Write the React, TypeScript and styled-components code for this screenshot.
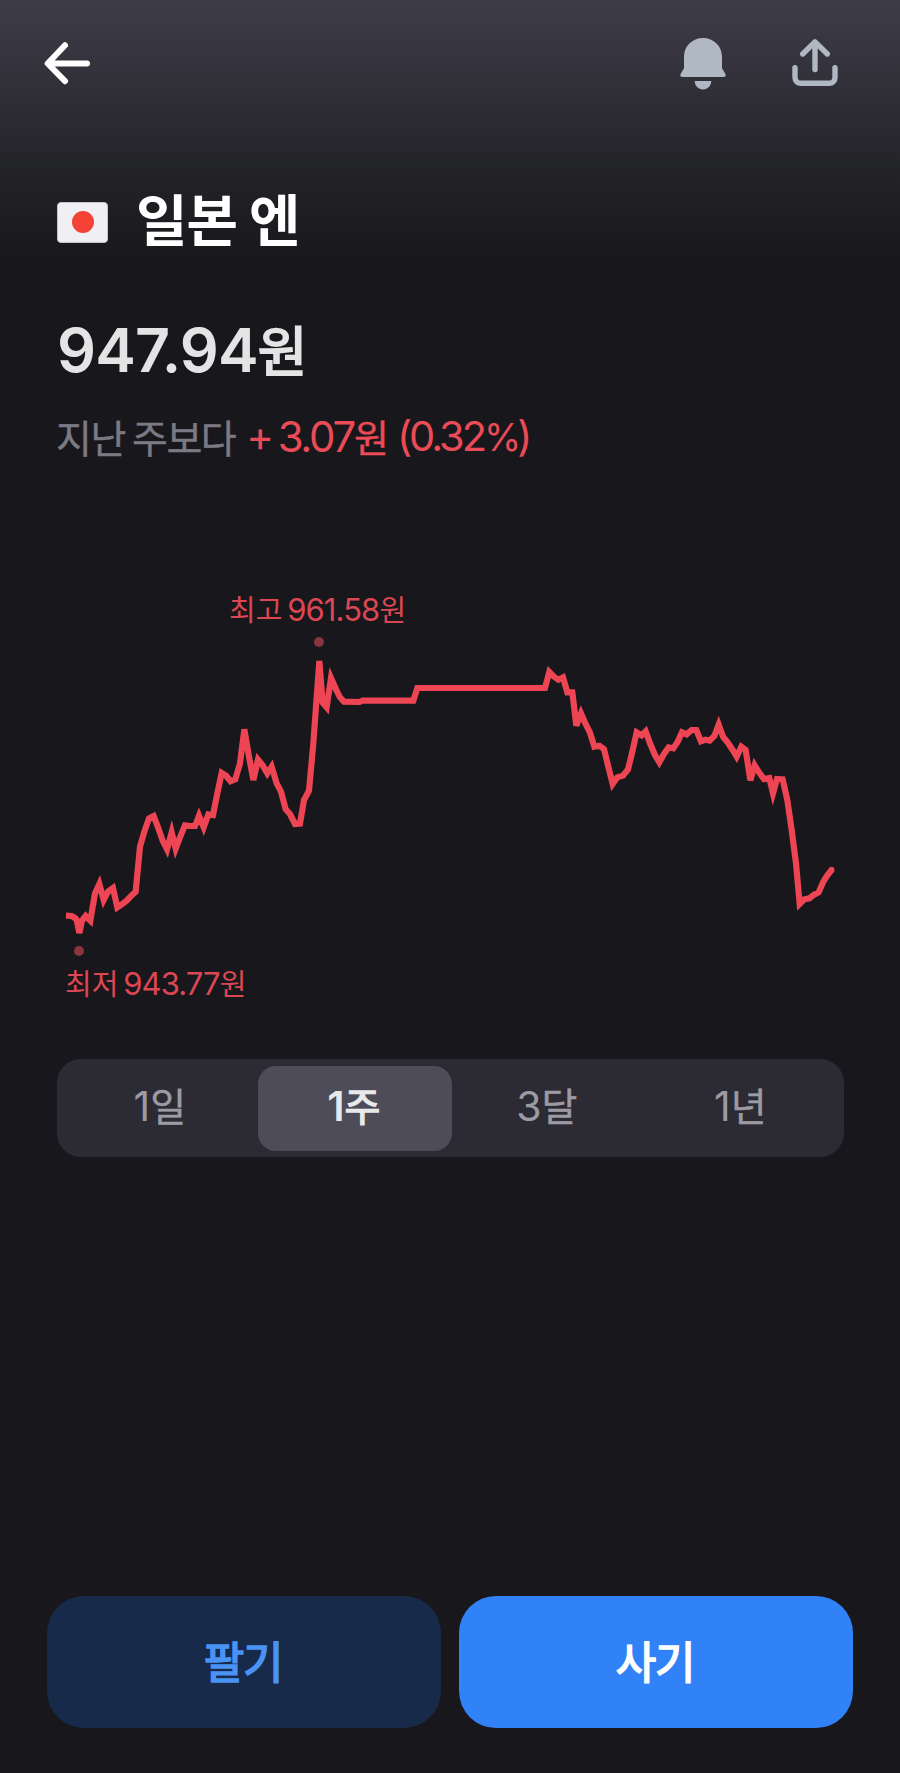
import React from "react";
import styled, { createGlobalStyle } from "styled-components";

const GlobalStyle = createGlobalStyle`
  *, *::before, *::after { box-sizing: border-box; }
  body { margin: 0; background: #18171c; }
  button { font: inherit; border: 0; padding: 0; background: none; color: inherit; cursor: pointer; }
`;

const Screen = styled.main`
  display: flex;
  flex-direction: column;
  width: 900px;
  height: 1773px;
  background: linear-gradient(
    180deg,
    #3e3d47 0,
    #383741 40px,
    #32313a 80px,
    #2a2932 130px,
    #242529 160px,
    #202024 200px,
    #18171c 262px
  );
  font-family: Inter, "Noto Sans CJK KR", sans-serif;
  -webkit-font-smoothing: antialiased;
  overflow: hidden;
`;

const TopBar = styled.header`
  display: flex;
  align-items: center;
  height: 128px;
  padding: 0 59px 0 41px;
`;

const IconButton = styled.button<{ $push?: boolean; $gap?: number }>`
  display: flex;
  width: 52px;
  height: 56px;
  margin-left: ${(p) => (p.$push ? "auto" : `${p.$gap ?? 0}px`)};
`;

const TitleRow = styled.div`
  display: flex;
  align-items: center;
  height: 60px;
  margin-top: 64px;
  padding-left: 57px;
  gap: 28px;
  line-height: 60px;
`;

const Flag = styled.div`
  display: flex;
  align-items: center;
  justify-content: center;
  width: 51px;
  height: 41px;
  border: 1.5px solid #c6c5cd;
  border-radius: 4px;
  background: #f0eff4;

  &::after {
    content: "";
    width: 22px;
    height: 22px;
    border-radius: 50%;
    background: #f44336;
  }
`;

const Title = styled.h1`
  margin: 0 0 2px;
  color: #fff;
  font-size: 56px;
  font-weight: 700;
  letter-spacing: -1.1px;
`;

const Hangul = styled.span<{ $size: number; $spacing?: number; $stroke?: number }>`
  font-family: "Noto Sans CJK KR", sans-serif;
  font-size: ${(p) => p.$size}px;
  font-weight: 400;
  letter-spacing: ${(p) => p.$spacing ?? 0}px;
  -webkit-text-stroke: ${(p) => p.$stroke ?? 0}px currentColor;
`;

const Price = styled.div`
  height: 70px;
  margin-top: 62px;
  padding-left: 57px;
  color: #e4e4e5;
  font-size: 61px;
  font-weight: 600;
  letter-spacing: -0.8px;
  line-height: 70px;
  white-space: nowrap;
`;

const Change = styled.div`
  display: flex;
  height: 50px;
  margin-top: 27px;
  padding-left: 56px;
  color: #7b7a83;
  font-size: 42px;
  line-height: 50px;
  white-space: nowrap;
`;

const Delta = styled.span`
  display: flex;
  margin-left: 11px;
  color: #ea4b57;
  letter-spacing: -2.3px;
`;

const Sign = styled.span`
  margin-right: 6px;
`;

const Ratio = styled.span`
  margin-left: 8px;
  font-size: 41.5px;
  letter-spacing: -3px;
`;

const Percent = styled.span`
  font-size: 38px;
  letter-spacing: -4px;
`;

const ChartLabel = styled.div<{ $left: number; $top?: number }>`
  height: 36px;
  margin-top: ${(p) => p.$top ?? 0}px;
  padding-left: ${(p) => p.$left}px;
  color: #dc4753;
  font-size: 31px;
  letter-spacing: -0.9px;
  line-height: 36px;
  word-spacing: -3px;
  white-space: nowrap;
`;

const Marker = styled.div<{ $left: number; $top: number }>`
  width: 10px;
  height: 10px;
  margin: ${(p) => p.$top}px 0 0 ${(p) => p.$left}px;
  border-radius: 50%;
  background: #89353f;
`;

const ChartBlock = styled.section`
  margin-top: 129px;
`;

const ChartSvg = styled.svg`
  display: block;
  width: 787px;
  height: 287px;
  margin: 6px 0 0 57px;
`;

const Segments = styled.div`
  display: grid;
  grid-template-columns: repeat(4, 1fr);
  width: 787px;
  height: 98px;
  margin: 59px 0 0 57px;
  padding: 7px 6px 7px 7px;
  border-radius: 24px;
  background: #2c2b34;
`;

const Segment = styled.button<{ $active?: boolean }>`
  margin-right: ${(p) => (p.$active ? -1 : 0)}px;
  padding: 0 2px 7px 0;
  border-radius: 18px;
  background: ${(p) => (p.$active ? "#4d4c58" : "transparent")};
  color: ${(p) => (p.$active ? "#e9e9ec" : "#9c9ba3")};
  font-size: 41px;
  font-weight: ${(p) => (p.$active ? 600 : 400)};
  line-height: 76px;
`;

const Actions = styled.footer`
  display: grid;
  grid-template-columns: 1fr 1fr;
  gap: 18px;
  margin: auto 47px 45px;
`;

const ActionButton = styled.button<{ $primary?: boolean }>`
  height: 132px;
  padding: 0 2px 5px 0;
  border-radius: 37px;
  background: ${(p) => (p.$primary ? "#3182f6" : "#182a49")};
  color: ${(p) => (p.$primary ? "#fff" : "#4a93f5")};
`;

const series: [number, number][] = [
  [48, 1007], [65, 1008], [75, 1014], [80, 1020], [88, 1059], [96, 1022], [107, 1008], [121, 1022],
  [135, 940], [148, 912], [161, 960], [174, 935], [189, 924], [202, 982], [217, 972], [230, 962],
  [244, 947], [257, 935], [270, 800], [283, 755], [297, 715], [311, 708], [324, 742], [338, 782],
  [351, 808], [365, 757], [377, 806], [390, 772], [405, 736], [420, 738], [435, 738], [447, 707],
  [461, 742], [475, 703], [489, 705], [502, 640], [515, 579], [528, 587], [542, 604], [556, 598],
  [570, 550], [583, 448], [597, 530], [610, 600], [624, 539], [638, 556], [652, 580], [665, 560],
  [680, 610], [693, 635], [707, 688], [720, 702], [735, 732], [750, 731], [762, 660], [777, 632],
  [790, 490], [808, 243], [818, 368], [830, 382], [843, 294], [858, 328], [870, 352], [882, 365],
  [928, 366], [938, 362], [1090, 362], [1102, 324], [1485, 324], [1498, 276], [1512, 290],
  [1525, 299], [1539, 292], [1552, 337], [1567, 337], [1579, 437], [1593, 400], [1606, 430],
  [1620, 458], [1633, 500], [1648, 497], [1662, 507], [1675, 560], [1688, 612], [1702, 592],
  [1719, 587], [1734, 568], [1747, 515], [1760, 457], [1775, 466], [1787, 454], [1800, 490],
  [1815, 525], [1828, 547], [1842, 522], [1856, 502], [1870, 505], [1883, 485], [1896, 457],
  [1910, 463], [1925, 450], [1939, 450], [1953, 484], [1967, 479], [1979, 482], [1993, 468],
  [2006, 434], [2019, 470], [2035, 490], [2048, 510], [2060, 530], [2074, 500], [2087, 510],
  [2101, 601], [2114, 556], [2127, 577], [2142, 597], [2158, 594], [2169, 640], [2181, 597],
  [2198, 598], [2212, 660], [2225, 750], [2238, 850], [2249, 972], [2263, 958], [2278, 955],
  [2292, 944], [2306, 937], [2320, 905], [2332, 886], [2347, 867],
];

const RateChart = () => (
  <ChartSvg viewBox="21 219 2361 861" aria-hidden="true">
    <polyline
      points={series.map((p) => p.join(",")).join(" ")}
      fill="none"
      stroke="#ed4553"
      strokeWidth="18.5"
      strokeMiterlimit="4"
    />
    <circle cx="2345" cy="868" r="8" fill="#ed4553" />
  </ChartSvg>
);

const BackIcon = () => (
  <svg width="52" height="56" viewBox="0 0 52 56" fill="none" stroke="#fff" strokeWidth="6" strokeLinecap="round" strokeLinejoin="round">
    <path d="M46 27.5H7M24 9.3L6.7 27.5L24 45.2" />
  </svg>
);

const BellIcon = () => (
  <svg width="52" height="56" viewBox="0 0 52 56" fill="#b0b8c4">
    <path d="M26 2C15.2 2 7 10.2 7 20.5V32.2L3.6 38.1C2.7 39.7 3.6 41 5.3 41H46.7C48.4 41 49.3 39.7 48.4 38.1L45 32.2V20.5C45 10.2 36.8 2 26 2Z" />
    <path d="M17.7 45H34.3C34.3 49.8 30.7 53.5 26 53.5S17.7 49.8 17.7 45Z" />
  </svg>
);

const ShareIcon = () => (
  <svg width="52" height="56" viewBox="0 0 52 56" fill="none" stroke="#b0b8c4" strokeWidth="5.4" strokeLinecap="round" strokeLinejoin="round">
    <path d="M26 33.5V6M13.7 18L26 5.9L38.3 18" />
    <path d="M6 31.6V41.5C6 45 8.5 47.3 12 47.3H40C43.5 47.3 46 45 46 41.5V31.6" />
  </svg>
);

const periods = [
  { count: "1", unit: "일" },
  { count: "1", unit: "주" },
  { count: "3", unit: "달" },
  { count: "1", unit: "년" },
];

export default function App() {
  const [selected, setSelected] = React.useState(1);

  return (
    <Screen>
      <GlobalStyle />
      <TopBar>
        <IconButton aria-label="뒤로">
          <BackIcon />
        </IconButton>
        <IconButton $push aria-label="알림">
          <BellIcon />
        </IconButton>
        <IconButton $gap={60} aria-label="공유">
          <ShareIcon />
        </IconButton>
      </TopBar>

      <TitleRow>
        <Flag />
        <Title>일본 엔</Title>
      </TitleRow>

      <Price>
        947.94<Hangul $size={54} $stroke={2}>원</Hangul>
      </Price>
      <Change>
        <Hangul $size={39} $spacing={-1.5} $stroke={0.4}>지난 주보다</Hangul>
        <Delta>
          <Sign>+</Sign>
          <span>
            3.07<Hangul $size={38} $stroke={0.4}>원</Hangul>
          </span>
          <Ratio>
            (0.32<Percent>%</Percent>)
          </Ratio>
        </Delta>
      </Change>

      <ChartBlock>
        <ChartLabel $left={229}>
          <Hangul $size={29}>최고</Hangul> 961.58<Hangul $size={29}>원</Hangul>
        </ChartLabel>
        <Marker $left={314} $top={11} />
        <RateChart />
        <Marker $left={74} $top={6} />
        <ChartLabel $left={65} $top={8}>
          <Hangul $size={29}>최저</Hangul> 943.77<Hangul $size={29}>원</Hangul>
        </ChartLabel>
      </ChartBlock>

      <Segments>
        {periods.map(({ count, unit }, i) => (
          <Segment key={unit} $active={i === selected} onClick={() => setSelected(i)}>
            {count}
            <Hangul $size={39} $stroke={i === selected ? 1.3 : 0.4}>{unit}</Hangul>
          </Segment>
        ))}
      </Segments>

      <Actions>
        <ActionButton>
          <Hangul $size={44} $spacing={-1.2} $stroke={1.6}>팔기</Hangul>
        </ActionButton>
        <ActionButton $primary>
          <Hangul $size={44} $spacing={-1.2} $stroke={1.6}>사기</Hangul>
        </ActionButton>
      </Actions>
    </Screen>
  );
}
